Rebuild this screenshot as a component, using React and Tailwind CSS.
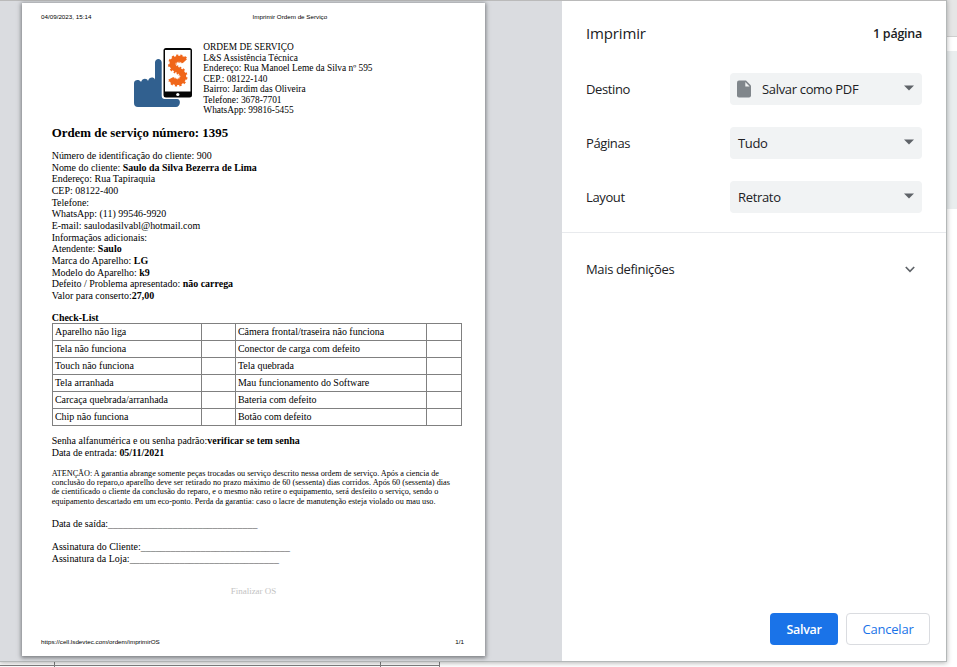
import React from "react";

const shopLines = [
  "ORDEM DE SERVIÇO",
  "L&S Assistência Técnica",
  "Endereço: Rua Manoel Leme da Silva nº 595",
  "CEP.: 08122-140",
  "Bairro: Jardim das Oliveira",
  "Telefone: 3678-7701",
  "WhatsApp: 99816-5455",
];

const details = [
  ["Número de identificação do cliente: 900", ""],
  ["Nome do cliente: ", "Saulo da Silva Bezerra de Lima"],
  ["Endereço: Rua Tapiraquia", ""],
  ["CEP: 08122-400", ""],
  ["Telefone:", ""],
  ["WhatsApp: (11) 99546-9920", ""],
  ["E-mail: saulodasilvabl@hotmail.com", ""],
  ["Informaçãos adicionais:", ""],
  ["Atendente: ", "Saulo"],
  ["Marca do Aparelho: ", "LG"],
  ["Modelo do Aparelho: ", "k9"],
  ["Defeito / Problema apresentado: ", "não carrega"],
  ["Valor para conserto:", "27,00"],
];

const checklist = [
  ["Aparelho não liga", "Câmera frontal/traseira não funciona"],
  ["Tela não funciona", "Conector de carga com defeito"],
  ["Touch não funciona", "Tela quebrada"],
  ["Tela arranhada", "Mau funcionamento do Software"],
  ["Carcaça quebrada/arranhada", "Bateria com defeito"],
  ["Chip não funciona", "Botão com defeito"],
];

const warning = [
  "ATENÇÃO: A garantia abrange somente peças trocadas ou serviço descrito nessa ordem de serviço. Após a ciencia de",
  "conclusão do reparo,o aparelho deve ser retirado no prazo máximo de 60 (sessenta) dias corridos. Após 60 (sessenta) dias",
  "de cientificado o cliente da conclusão do reparo, e o mesmo não retire o equipamento, será desfeito o serviço, sendo o",
  "equipamento descartado em um eco-ponto. Perda da garantia: caso o lacre de manutenção esteja violado ou mau uso.",
];

function Logo() {
  return (
    <svg width="60" height="61" viewBox="0 0 60 61" className="shrink-0">
      <path
        fill="#31608f"
        d="M0 36C0 33 5 31.500 7 35C8 31 13 30.500 14 34C15 30 19.500 29.500 21 32.500V15.500C21 10.800 27.700 10.800 27.700 15.500V49C27.700 51 29 52 30.500 52H43C47.500 52 46.500 60 42 60H4Q0 60 0 56Z"
      />
      <rect x="29.500" y="1" width="28.500" height="49.500" rx="2.500" fill="#050505" />
      <rect x="31" y="3" width="25.500" height="41.500" fill="#fff" />
      <circle cx="43.800" cy="47.500" r="1.600" fill="#fff" />
      <path
        fill="none"
        stroke="#f0661a"
        strokeWidth="5.800"
        d="M50.800 14.200C47.500 10.500 38.300 10.800 38.300 17.300C38.300 24 49.300 22 49.300 29.500C49.300 36.500 40 37 36.800 31.300"
      />
      <path
        fill="none"
        stroke="#f0661a"
        strokeWidth="8.400"
        strokeDasharray="1.500 1.500"
        d="M50 13.500C47 10.500 38.300 10.800 38.300 17.300C38.300 24 49.300 22 49.300 29.500C49.300 36.500 40.500 37 37.800 32.500"
      />
    </svg>
  );
}

function Select({ label, value, icon }) {
  return (
    <div className="flex h-8 items-center">
      <div className="w-36 pt-[2px] tracking-[-0.38px]">{label}</div>
      <div className="flex h-8 w-48 items-center rounded bg-[#f1f3f4] pr-2 pl-2">
        {icon && (
          <svg width="14" height="18" viewBox="0 0 14 18" className="mr-[11px] -ml-[1px]">
            <path fill="#80868b" d="M2 0.5H9L14 5.5V15.5Q14 17.5 12 17.5H2Q0 17.5 0 15.5V2.5Q0 0.5 2 0.5Z" />
            <path fill="#f1f3f4" d="M8.3 2L12.6 6.6H8.3Z" />
          </svg>
        )}
        <span className="pt-[2px] tracking-[-0.33px]">{value}</span>
        <svg width="10" height="6" viewBox="0 0 10 6" className="-mt-[2px] ml-auto">
          <path fill="#5f6368" d="M0 0.5H10L5 5.5Z" />
        </svg>
      </div>
    </div>
  );
}

function Preview() {
  return (
    <div className="w-[562px] bg-[#dadce0] pt-[2px] pl-[22px]">
      <div className="flex h-[653px] w-[463px] flex-col bg-white font-['Liberation_Serif',serif] text-[9.96px] text-black shadow-[0_1px_4px_1px_rgba(60,64,67,0.6)]">
        <div className="flex pt-[9px] pl-[19px] font-['Liberation_Sans',sans-serif] text-[6.25px] leading-[9px] whitespace-nowrap">
          <span className="w-[211.5px]">04/09/2023, 15:14</span>
          <span>Imprimir Ordem de Serviço</span>
        </div>
        <div className="mt-[21px] flex pl-[112px]">
          <div className="w-[69.3px] pt-[5px]">
            <Logo />
          </div>
          <div className="text-[9.38px] leading-[10.55px] whitespace-nowrap">
            {shopLines.map((l) => (
              <div key={l}>{l}</div>
            ))}
          </div>
        </div>
        <div className="pl-[29.7px] leading-[11.67px] whitespace-nowrap">
          <h1 className="mt-[9px] text-[12.88px] leading-4 font-bold">Ordem de serviço número: 1395</h1>
          <div className="mt-[9px]">
            {details.map(([a, b]) => (
              <div key={a}>
                {a}
                <b>{b}</b>
              </div>
            ))}
          </div>
          <div className="mt-[10px] font-bold">Check-List</div>
          <table className="ml-[0.3px] w-[410px] table-fixed border-collapse leading-[14px]">
            <colgroup>
              <col className="w-[149px]" />
              <col className="w-[34px]" />
              <col className="w-[191px]" />
              <col className="w-[35px]" />
            </colgroup>
            <tbody>
              {checklist.map(([a, b]) => (
                <tr key={a} className="h-[17px]">
                  <td className="border border-[#808080] p-0 pl-[2px]">{a}</td>
                  <td className="border border-[#808080] p-0" />
                  <td className="border border-[#808080] p-0 pl-[2px]">{b}</td>
                  <td className="border border-[#808080] p-0" />
                </tr>
              ))}
            </tbody>
          </table>
          <div className="mt-[9px]">
            Senha alfanumérica e ou senha padrão:<b>verificar se tem senha</b>
          </div>
          <div>
            Data de entrada: <b>05/11/2021</b>
          </div>
          <div className="mt-[10px] text-[8.21px] leading-[9.4px]">
            {warning.map((l) => (
              <div key={l}>{l}</div>
            ))}
          </div>
          <div className="mt-[11.6px]">Data de saída:<span className="text-[#555]">______________________________</span></div>
          <div className="mt-[11.5px]">Assinatura do Cliente:<span className="text-[#555]">______________________________</span></div>
          <div>Assinatura da Loja:<span className="text-[#555]">______________________________</span></div>
        </div>
        <div className="mt-[21px] text-center text-[9px] leading-3 text-[#c3c3c3]">Finalizar OS</div>
        <div className="mt-auto flex justify-between pr-[21px] pb-[10px] pl-[19px] font-['Liberation_Sans',sans-serif] text-[6.25px] leading-[9px]">
          <span>https://cell.lsdevtec.com/ordem/imprimirOS</span>
          <span>1/1</span>
        </div>
      </div>
    </div>
  );
}

function Settings() {
  return (
    <div className="flex w-[384px] flex-col bg-white text-[13px] text-[#202124]">
      <div className="flex h-[72px] items-center justify-between pr-6 pb-[7px] pl-6">
        <h2 className="text-[15px] tracking-[-0.15px]">Imprimir</h2>
        <span className="pt-[2px] text-[12.5px] font-semibold tracking-[-0.25px]">1 página</span>
      </div>
      <div className="flex flex-col gap-[22px] pl-6">
        <Select label="Destino" value="Salvar como PDF" icon />
        <Select label="Páginas" value="Tudo" />
        <Select label="Layout" value="Retrato" />
      </div>
      <div className="mt-[19px] flex h-[73px] items-center justify-between border-t border-[#e8eaed] pr-[31px] pl-6">
        <span className="pt-[2px] tracking-[-0.35px]">Mais definições</span>
        <svg width="10" height="7" viewBox="0 0 10 7">
          <path d="M0.8 1L5 5.3L9.2 1" fill="none" stroke="#5f6368" strokeWidth="1.7" />
        </svg>
      </div>
      <div className="mt-auto flex justify-end gap-2 pr-4 pb-4 font-medium">
        <button className="h-8 w-[68px] rounded bg-[#1a73e8] pt-[2px] text-[12.5px] font-semibold tracking-[-0.3px] text-white">Salvar</button>
        <button className="h-8 w-[84px] rounded border border-[#dadce0] pt-px tracking-[-0.2px] text-[#1a73e8]">Cancelar</button>
      </div>
    </div>
  );
}

export default function App() {
  return (
    <div className="flex h-[667px] w-[957px] flex-col overflow-hidden bg-white font-['Open_Sans',sans-serif]">
      <div className="flex h-[661px]">
        <div className="z-10 flex h-[661px] w-[946px] border-t border-[#bababa] shadow-[0_0_0_1px_#b4b8b8,0_1px_5px_1px_rgba(0,0,0,0.3)]">
          <Preview />
          <Settings />
        </div>
        <div className="flex-1">
          <div className="h-[37px] border-b border-[#cfcfcf] bg-[#e6e6e6]" />
          <div className="h-[14px]" />
          <div className="h-[158px] bg-[#e9edee]" />
        </div>
      </div>
      <div className="flex h-[6px] w-[440px]">
        <div className="w-[55px] border-r border-[#808080] pt-[4px]"><div className="h-px bg-[#808080]" /></div>
        <div className="w-[326px] border-r border-[#808080] pt-[4px]"><div className="h-px bg-[#808080]" /></div>
        <div className="w-[59px] border-r border-[#808080] pt-[4px]"><div className="h-px bg-[#808080]" /></div>
      </div>
    </div>
  );
}
